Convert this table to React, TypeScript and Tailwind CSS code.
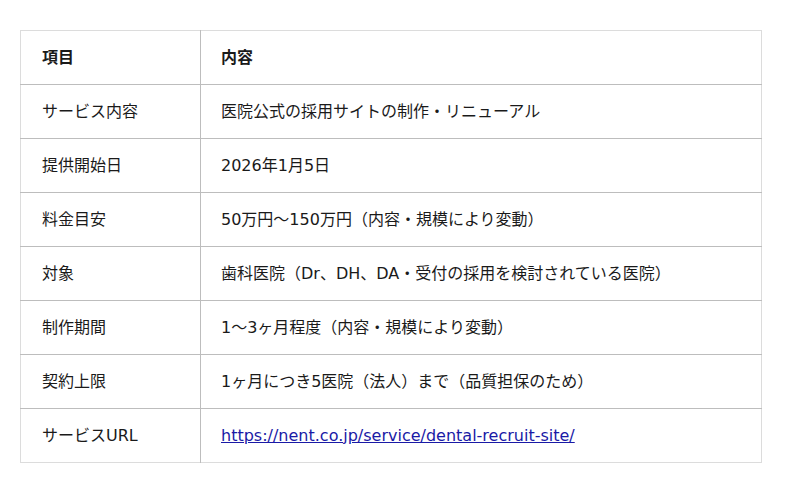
const rows: [string, string][] = [
  ["サービス内容", "医院公式の採用サイトの制作・リニューアル"],
  ["提供開始日", "2026年1月5日"],
  ["料金目安", "50万円〜150万円（内容・規模により変動）"],
  ["対象", "歯科医院（Dr、DH、DA・受付の採用を検討されている医院）"],
  ["制作期間", "1〜3ヶ月程度（内容・規模により変動）"],
  ["契約上限", "1ヶ月につき5医院（法人）まで（品質担保のため）"],
];

const url = "https://nent.co.jp/service/dental-recruit-site/";

export default function App() {
  return (
    <div
      className="min-h-[493px] bg-white pt-[30px] pl-[20px] text-[16px] text-[#1a1a1a]"
      style={{ fontFamily: '"DejaVu Sans", "Noto Sans CJK JP", sans-serif' }}
    >
      <table className="w-[742px] border-collapse border border-[#dcdcdc]">
        <thead>
          <tr className="h-[54px] border-b border-[#bdbdbd]">
            <th className="w-[180px] border-r border-[#bdbdbd] pl-[21px] text-left font-bold">
              項目
            </th>
            <th className="pl-[20px] text-left font-bold">内容</th>
          </tr>
        </thead>
        <tbody>
          {rows.map(([k, v]) => (
            <tr key={k} className="h-[54px] border-b border-[#bdbdbd]">
              <td className="border-r border-[#bdbdbd] pl-[21px]">{k}</td>
              <td className="pl-[20px]">{v}</td>
            </tr>
          ))}
          <tr className="h-[54px]">
            <td className="border-r border-[#bdbdbd] pl-[21px]">サービスURL</td>
            <td className="pl-[20px]">
              <a href="#" className="text-[#1a1aa6] underline">
                {url}
              </a>
            </td>
          </tr>
        </tbody>
      </table>
    </div>
  );
}
